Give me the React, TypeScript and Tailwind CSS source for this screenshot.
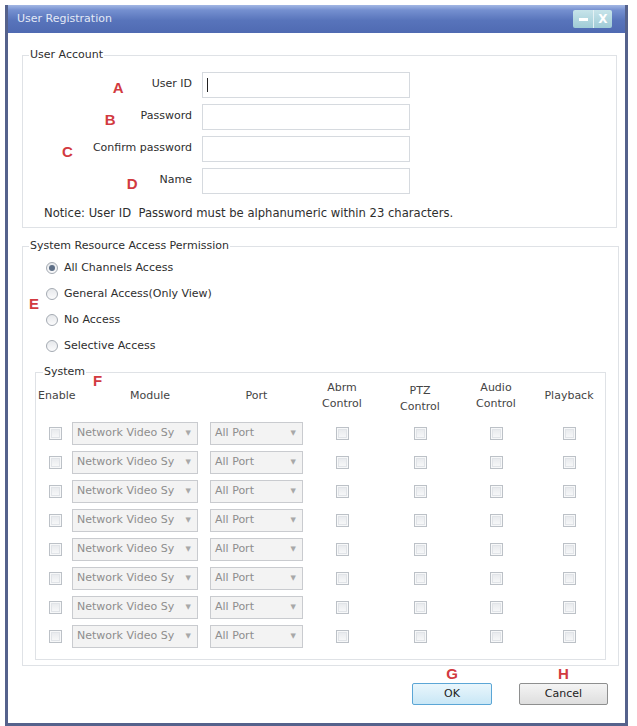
import React from "react";

const font = { fontFamily: '"DejaVu Sans", "Liberation Sans", sans-serif' };

function Letter({ children, className = "" }: { children: React.ReactNode; className?: string }) {
  return (
    <span
      className={`text-[15px] font-bold leading-none text-[#d23a40] ${className}`}
      style={{ fontFamily: '"Liberation Sans", Arial, sans-serif' }}
    >
      {children}
    </span>
  );
}

function TextRow({
  letter,
  letterGap,
  label,
  cursor,
}: {
  letter: string;
  letterGap: string;
  label: string;
  cursor?: boolean;
}) {
  return (
    <div className="flex h-[26px] items-center">
      <div className="flex w-[169px] items-center justify-end">
        <Letter className={`mt-[6px] ${letterGap}`}>{letter}</Letter>
        <span className="text-[11px] text-[#2e2e2e]">{label}</span>
      </div>
      <div className="ml-[10px] flex h-[26px] w-[208px] items-center border border-[#d6dadf] bg-white pl-[4px]">
        {cursor && <span className="h-[14px] w-px bg-[#222]" />}
      </div>
    </div>
  );
}

function Radio({ label, checked }: { label: string; checked?: boolean }) {
  return (
    <div className="flex h-[20px] items-center">
      <span className="flex h-[12px] w-[12px] items-center justify-center rounded-full border border-[#a4aab2] bg-[linear-gradient(to_bottom,#e6e8eb,#fbfbfc)]">
        {checked && <span className="h-[6px] w-[6px] rounded-full bg-[#5d6e86]" />}
      </span>
      <span className="ml-[6px] text-[11px] text-[#2e2e2e]">{label}</span>
    </div>
  );
}

function Box() {
  return (
    <span className="flex h-[13px] w-[13px] items-center justify-center border border-[#bcc1c7] bg-[#f7f8f9]">
      <span className="block h-[9px] w-[9px] border border-[#e1e4e8] bg-[linear-gradient(to_bottom,#e9ebee,#f6f7f8)]" />
    </span>
  );
}

function Select({ value, width }: { value: string; width: string }) {
  return (
    <div
      className={`flex h-[23px] ${width} items-center justify-between border border-[#c9cbcf] bg-[#f3f3f3] pl-[4px] pr-[6px] text-[11px] text-[#8e8e8e]`}
    >
      <span>{value}</span>
      <span className="text-[7px] text-[#a8a8a8]">▼</span>
    </div>
  );
}

function PermRow() {
  return (
    <div className="flex h-[29px] items-center">
      <div className="w-[36px] pl-[13px]">
        <Box />
      </div>
      <div className="w-[138px]">
        <Select value="Network Video Sy" width="w-[126px]" />
      </div>
      <div className="w-[93px]">
        <Select value="All Port" width="w-[93px]" />
      </div>
      <div className="flex w-[78px] justify-center">
        <Box />
      </div>
      <div className="flex w-[78px] justify-center">
        <Box />
      </div>
      <div className="flex w-[74px] justify-center">
        <Box />
      </div>
      <div className="flex w-[72px] justify-center">
        <Box />
      </div>
    </div>
  );
}

export default function App() {
  const rows = Array.from({ length: 8 }, (_, i) => i);
  return (
    <div className="h-[726px] w-[637px] bg-white pl-[5px] pt-[5px]" style={font}>
      <div className="flex h-[721px] w-[623px] flex-col border-x-[3px] border-b-[3px] border-[#55628c] bg-white">
        {/* title bar */}
        <div className="flex h-[28px] items-center justify-between bg-[linear-gradient(to_bottom,#a3b7e4_0%,#7590d0_18%,#5874bb_55%,#4f6ab2_100%)] pl-[9px] pr-[13px]">
          <span className="text-[11px] text-[#e3e9f6]">User Registration</span>
          <div className="flex h-[18px] items-center">
            <div className="flex h-[18px] w-[20px] items-center justify-center rounded-l-[2px] bg-[linear-gradient(to_bottom,#c7e4ea,#9fcbd6)]">
              <span className="h-[3px] w-[9px] bg-white" />
            </div>
            <div className="flex h-[18px] w-[19px] items-center justify-center rounded-r-[2px] border-l border-[#e4f1f4] bg-[linear-gradient(to_bottom,#c7e4ea,#9fcbd6)] text-[12px] font-bold leading-none text-white">
              X
            </div>
          </div>
        </div>

        <div className="flex flex-1 flex-col pl-[14px] pr-[8px]">
          {/* user account */}
          <fieldset className="mt-[14px] border border-[#dfe2e6] pb-[5px]">
            <legend className="ml-[6px] px-[1px] text-[11px] text-[#2e2e2e]">User Account</legend>
            <div className="flex flex-col gap-[6px] pt-[8px]">
              <TextRow letter="A" letterGap="mr-[28px]" label="User ID" cursor />
              <TextRow letter="B" letterGap="mr-[25px]" label="Password" />
              <TextRow letter="C" letterGap="mr-[20px]" label="Confirm password" />
              <TextRow letter="D" letterGap="mr-[22px]" label="Name" />
            </div>
            <div className="mt-[11px] pl-[21px] text-[11.6px] text-[#2e2e2e]">
              Notice: User ID&nbsp; Password must be alphanumeric within 23 characters.
            </div>
          </fieldset>

          {/* access permission */}
          <fieldset className="relative mt-[10px] border border-[#dfe2e6] pb-[5px]">
            <legend className="ml-[6px] px-[1px] text-[11px] text-[#2e2e2e]">
              System Resource Access Permission
            </legend>
            <Letter className="absolute left-[6px] top-[42px]">E</Letter>
            <div className="flex flex-col gap-[6px] pl-[23px] pt-[4px]">
              <Radio label="All Channels Access" checked />
              <Radio label="General Access(Only View)" />
              <Radio label="No Access" />
              <Radio label="Selective Access" />
            </div>

            <fieldset className="relative mx-[12px] mt-[8px] border border-[#dfe2e6] pb-[8px]">
              <legend className="ml-[7px] px-[1px] text-[11px] text-[#2e2e2e]">System</legend>
              <Letter className="absolute left-[57px] top-[-8px]">F</Letter>
              <div className="flex h-[30px] items-center text-[11px] leading-[16px] text-[#444]">
                <div className="w-[36px] pl-[2px]">Enable</div>
                <div className="w-[138px] pl-[18px] text-center">Module</div>
                <div className="w-[93px] text-center">Port</div>
                <div className="w-[78px] text-center">
                  Abrm
                  <br />
                  Control
                </div>
                <div className="w-[78px] pt-[6px] text-center">
                  PTZ
                  <br />
                  Control
                </div>
                <div className="w-[74px] text-center">
                  Audio
                  <br />
                  Control
                </div>
                <div className="w-[72px] text-center">Playback</div>
              </div>
              <div className="flex flex-col pt-[8px]">
                {rows.map((r) => (
                  <PermRow key={r} />
                ))}
              </div>
            </fieldset>
          </fieldset>

          {/* buttons */}
          <div className="flex justify-end pr-[9px]">
            <div className="flex flex-col items-center">
              <Letter>G</Letter>
              <button className="mt-[2px] h-[22px] w-[80px] rounded-[2px] border border-[#5ba6d6] bg-[linear-gradient(to_bottom,#e9f6fc,#c9e7f6)] text-[11px] text-[#222]">
                OK
              </button>
            </div>
            <div className="ml-[27px] flex flex-col items-center">
              <Letter>H</Letter>
              <button className="mt-[2px] h-[22px] w-[89px] rounded-[2px] border border-[#8e8f8f] bg-[linear-gradient(to_bottom,#f4f4f4,#dedede)] text-[11px] text-[#222]">
                Cancel
              </button>
            </div>
          </div>
        </div>
      </div>
    </div>
  );
}
